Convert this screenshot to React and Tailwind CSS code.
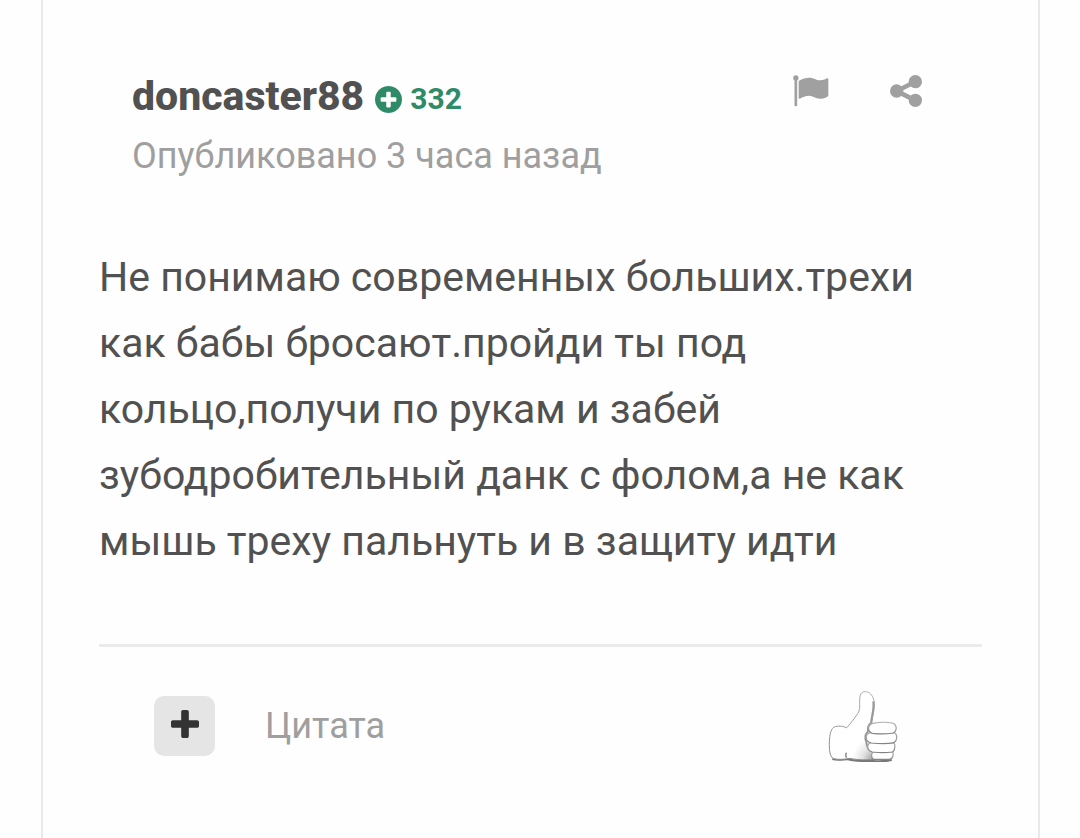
import React from "react";

function PlusCircleIcon() {
  return (
    <svg viewBox="128 128 1536 1536" fill="currentColor" className="w-[27px] h-[27px]" aria-hidden="true">
      <path d="M1344 960v-128q0-26-19-45t-45-19h-256v-256q0-26-19-45t-45-19h-128q-26 0-45 19t-19 45v256h-256q-26 0-45 19t-19 45v128q0 26 19 45t45 19h256v256q0 26 19 45t45 19h128q26 0 45-19t19-45v-256h256q26 0 45-19t19-45zm320-64q0 209-103 385.5t-279.5 279.5-385.5 103-385.5-103-279.5-279.5-103-385.5 103-385.5 279.5-279.5 385.5-103 385.5 103 279.5 279.5 103 385.5z" />
    </svg>
  );
}

function PlusIcon() {
  return (
    <svg viewBox="192 128 1408 1408" fill="currentColor" className="w-7 h-7" aria-hidden="true">
      <path d="M1600 736v192q0 40-28 68t-68 28h-416v416q0 40-28 68t-68 28h-192q-40 0-68-28t-28-68v-416h-416q-40 0-68-28t-28-68v-192q0-40 28-68t68-28h416v-416q0-40 28-68t68-28h192q40 0 68 28t28 68v416h416q40 0 68 28t28 68z" />
    </svg>
  );
}

function FlagIcon() {
  return (
    <svg viewBox="38 46 108 96" fill="currentColor" className="w-9 h-8" aria-hidden="true">
      <circle cx="46.5" cy="55" r="8" />
      <rect x="42.5" y="55" width="8" height="85" rx="3" />
      <path d="M55 64C66 57 77 54 87 54c14 0 20 8 32 8 9 0 15-3 21-6 3-1 4 0 4 3v48c0 2-1 3-3 4-7 4-14 6-22 6-14 0-21-9-33-9-10 0-19 4-27 9-2 1-4 0-4-2V67c0-1 0-2 1-3z" />
    </svg>
  );
}

function ShareIcon() {
  return (
    <svg viewBox="128 128 1536 1536" fill="currentColor" className="w-8 h-8" aria-hidden="true">
      <path d="M1344 1024q133 0 226.5 93.5t93.5 226.5-93.5 226.5-226.5 93.5-226.5-93.5-93.5-226.5q0-12 2-34l-360-180q-92 86-218 86-133 0-226.5-93.5t-93.5-226.5 93.5-226.5 226.5-93.5q126 0 218 86l360-180q-2-22-2-34 0-133 93.5-226.5t226.5-93.5 226.5 93.5 93.5 226.5-93.5 226.5-226.5 93.5q-126 0-218-86l-360 180q2 22 2 34t-2 34l360 180q92-86 218-86z" />
    </svg>
  );
}

function ThumbIcon() {
  return (
    <svg viewBox="50 42 216 216" className="w-[72px] h-[72px]" aria-hidden="true">
      <defs>
        <linearGradient id="outline" x1="0" y1="0" x2="0" y2="1">
          <stop offset="0" stopColor="#b0b0b0" />
          <stop offset="1" stopColor="#848484" />
        </linearGradient>
        <radialGradient id="palm" gradientUnits="userSpaceOnUse" cx="188" cy="250" r="62">
          <stop offset="0" stopColor="#a0a0a0" />
          <stop offset="0.5" stopColor="#e2e2e2" />
          <stop offset="1" stopColor="#fff" />
        </radialGradient>
        <filter id="soft" x="-20%" y="-20%" width="140%" height="140%">
          <feGaussianBlur stdDeviation="2" />
        </filter>
      </defs>
      <path
        d="M66 249C90 256 108 246 118 251c22 5 46 4 70 4 20 1 40 1 56-3"
        fill="none"
        stroke="#777"
        strokeWidth="6"
        filter="url(#soft)"
      />
      {/* hand and thumb */}
      <path
        d="M108 156C118 146 138 120 145 108c6-12 1-33 4-48 2-9 8-14 17-13 14 1 24 15 26 33 2 21-6 40-8 62l6 108c-26 3-55 1-72-3-16 4-36 4-48 1-10-4-13-21-13-42 0-24 3-45 13-52 12-6 31-4 38 2z"
        fill="url(#palm)"
        stroke="url(#outline)"
        strokeWidth="3"
      />
      <path d="M189 76c3 24-5 44-7 65-8 5-10 15-9 25-9 10-10 22-5 32 1 12 3 21 13 25" fill="none" stroke="#999" strokeWidth="6" filter="url(#soft)" />
      <path d="M109 245c-4-5-4-10 0-15" fill="none" stroke="#999" strokeWidth="5" filter="url(#soft)" />
      {/* fingers, bottom one first */}
      <g fill="#fff" stroke="url(#outline)" strokeWidth="3.5">
        <path d="M190 227h50c8 0 10 4 8 12-1 8-5 11-14 11h-42c-9 0-12-18-2-23z" />
        <path d="M184 199c22 3 44 2 65 1 7 3 6 25-4 28-19 3-41 2-59 0-17-4-19-25-2-29z" />
        <path d="M180 170c24 4 48 2 73 0 9 6 8 24-2 30-20 4-45 3-68 1-20-4-20-27-3-31z" />
        <path d="M187 142c20-4 42-4 59-1 15 5 15 24 2 30-18 3-43 3-62 1-15-6-15-25 1-30z" />
      </g>
    </svg>
  );
}

function App() {
  return (
    <div className="min-h-screen bg-[#fefefe] flex flex-col font-['Roboto',sans-serif] text-[#515151]">
      <article className="grow ml-[41px] mr-10 px-14 border-x-2 border-[#e9e9e9]">
        <header className="flex items-start justify-between pt-[72px] pl-[33px] pr-[60px]">
          <div>
            <div className="flex items-center gap-[11px]">
              <h3 className="text-[41px] leading-[48px] font-extrabold">doncaster88</h3>
              <div className="flex items-center gap-2 pt-[6px] text-[#2f8a68]">
                <PlusCircleIcon />
                <span className="text-[30px] leading-9 font-bold">332</span>
              </div>
            </div>
            <p className="mt-3 text-4xl leading-[48px] text-[#9f9f9f]">
              Опубликовано 3 часа назад
            </p>
          </div>

          <div className="flex items-center gap-[61px] pt-[3px] text-[#a0a0a0]">
            <button type="button" aria-label="Пожаловаться">
              <FlagIcon />
            </button>
            <button type="button" aria-label="Поделиться">
              <ShareIcon />
            </button>
          </div>
        </header>

        <p className="mt-16 text-[41px] leading-[66px]">
          Не понимаю современных больших.трехи как бабы бросают.пройди ты под
          кольцо,получи по рукам и забей зубодробительный данк с фолом,а не как
          мышь треху пальнуть и в защиту идти
        </p>

        <footer className="mt-[70px] pt-[43px] pl-[55px] pr-[83px] flex items-center justify-between border-t-3 border-[#ebebeb]">
          <div className="flex items-center gap-[50px]">
            <button
              type="button"
              aria-label="Добавить в цитаты"
              className="w-[61px] h-[60px] pb-1 flex items-center justify-center rounded-[10px] bg-[#e5e5e5] text-[#333]"
            >
              <PlusIcon />
            </button>
            <button type="button" className="text-4xl leading-[48px] text-[#9f9f9f]">
              Цитата
            </button>
          </div>
          <button type="button" aria-label="Нравится">
            <ThumbIcon />
          </button>
        </footer>
      </article>
    </div>
  );
}

export default App;
